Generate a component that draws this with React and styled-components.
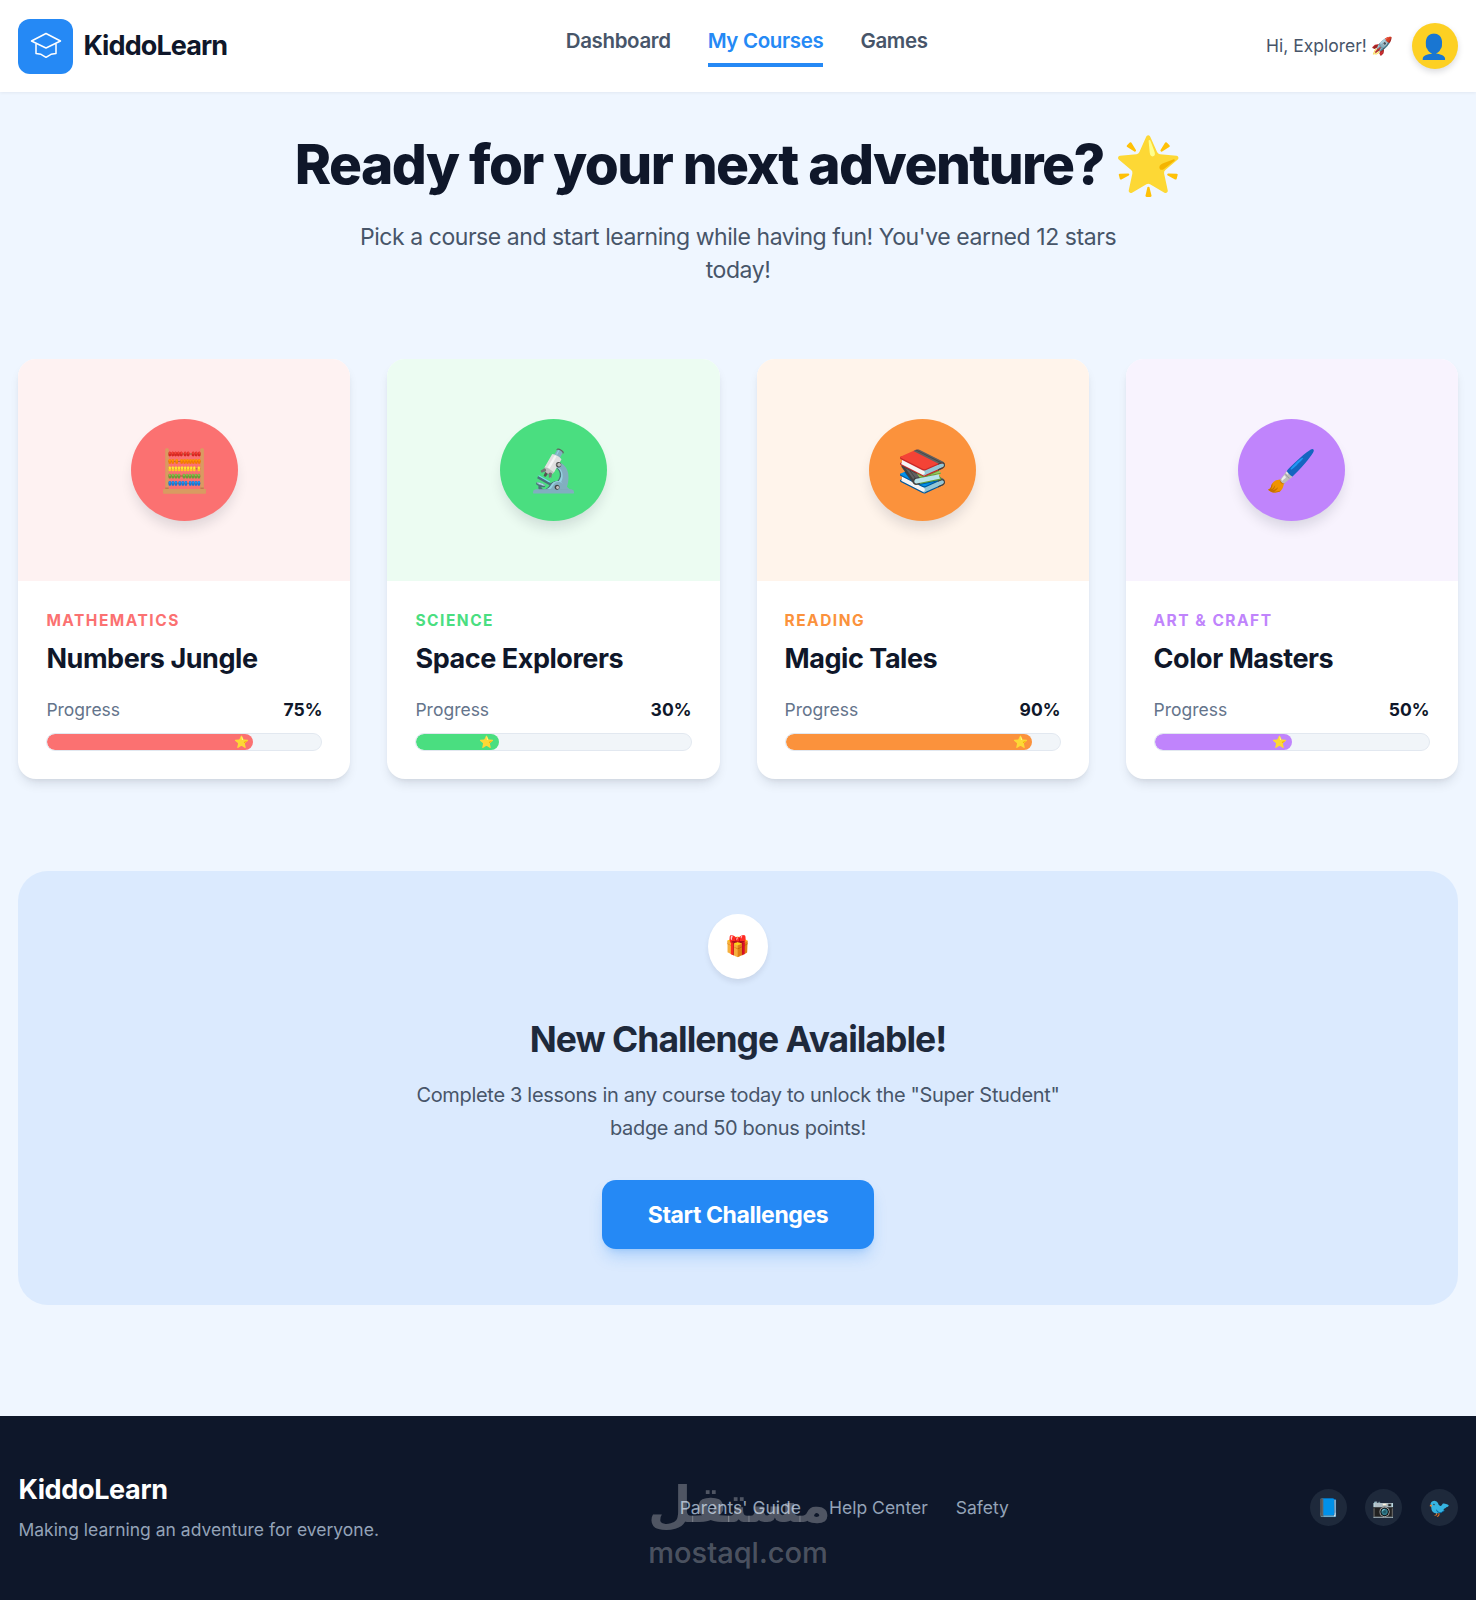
import React from "react";
import styled, { createGlobalStyle } from "styled-components";

const courses = [
  { subject: "MATHEMATICS", title: "Numbers Jungle", progress: 75, icon: "🧮", color: "#fb7171", tint: "#fef2f2" },
  { subject: "SCIENCE", title: "Space Explorers", progress: 30, icon: "🔬", color: "#4ade80", tint: "#ecfcf2" },
  { subject: "READING", title: "Magic Tales", progress: 90, icon: "📚", color: "#fb923c", tint: "#fff4eb" },
  { subject: "ART & CRAFT", title: "Color Masters", progress: 50, icon: "🖌️", color: "#c084fc", tint: "#f8f3fe" },
];

const App = () => {
  return (
    <Page>
      <GlobalStyle />
      <Header>
        <Brand>
          <LogoBox>
            <svg width="32" height="32" viewBox="0 0 32 32" fill="none" stroke="#fff" strokeWidth="1.5" strokeLinejoin="round">
              <path d="M16 3.500 30.500 11 16 18 1.500 11Z" />
              <path d="M6 14v9.500l5 .8 5 3 5-3 5-.8V14" />
            </svg>
          </LogoBox>
          <BrandName>KiddoLearn</BrandName>
        </Brand>
        <Nav>
          <NavLink>Dashboard</NavLink>
          <NavLink $active>My Courses</NavLink>
          <NavLink>Games</NavLink>
        </Nav>
        <UserArea>
          <Greeting>Hi, Explorer! 🚀</Greeting>
          <Avatar>👤</Avatar>
        </UserArea>
      </Header>

      <Main>
        <Hero>
          <HeroTitle>Ready for your next adventure? 🌟</HeroTitle>
          <HeroText>Pick a course and start learning while having fun! You've earned 12 stars today!</HeroText>
        </Hero>

        <CourseGrid>
          {courses.map((course) => (
            <Card key={course.title}>
              <CardTop $tint={course.tint}>
                <CourseIcon $color={course.color}>{course.icon}</CourseIcon>
              </CardTop>
              <CardBody>
                <Subject $color={course.color}>{course.subject}</Subject>
                <CourseTitle>{course.title}</CourseTitle>
                <ProgressRow>
                  <ProgressLabel>Progress</ProgressLabel>
                  <ProgressValue>{course.progress}%</ProgressValue>
                </ProgressRow>
                <Track>
                  <Fill $color={course.color} style={{ width: `${course.progress}%` }}>
                    <Star>⭐</Star>
                  </Fill>
                </Track>
              </CardBody>
            </Card>
          ))}
        </CourseGrid>

        <Challenge>
          <GiftCircle>🎁</GiftCircle>
          <ChallengeTitle>New Challenge Available!</ChallengeTitle>
          <ChallengeText>
            Complete 3 lessons in any course today to unlock the "Super Student" badge and 50 bonus points!
          </ChallengeText>
          <StartButton>Start Challenges</StartButton>
        </Challenge>
      </Main>

      <Footer>
        <div>
          <FooterBrand>KiddoLearn</FooterBrand>
          <FooterTag>Making learning an adventure for everyone.</FooterTag>
        </div>
        <FooterLinks>
          <FooterLink>Parents' Guide</FooterLink>
          <FooterLink>Help Center</FooterLink>
          <FooterLink>Safety</FooterLink>
        </FooterLinks>
        <Socials>
          <Social>📘</Social>
          <Social>📷</Social>
          <Social>🐦</Social>
        </Socials>
        <Watermark>
          <WatermarkArabic>مستقل</WatermarkArabic>
          <WatermarkLatin>mostaql.com</WatermarkLatin>
        </Watermark>
      </Footer>
    </Page>
  );
};

const GlobalStyle = createGlobalStyle`
  * { box-sizing: border-box; }
  body {
    margin: 0;
    background: #eff6ff;
    font-family: "Inter", "Noto Color Emoji", sans-serif;
  }
`;

const Page = styled.div`
  width: 1476px;
  height: 1600px;
  display: flex;
  flex-direction: column;
  overflow: hidden;
`;

const Header = styled.header`
  height: 92px;
  flex: 0 0 auto;
  background: #fff;
  box-shadow: 0 1px 3px rgba(15, 23, 42, 0.06);
  padding: 0 18.400px;
  display: flex;
  justify-content: space-between;
  align-items: center;
`;

const Brand = styled.div`
  display: flex;
  align-items: center;
  gap: 10px;
`;

const LogoBox = styled.div`
  width: 55px;
  height: 55px;
  border-radius: 12px;
  background: #2589f5;
  display: flex;
  align-items: center;
  justify-content: center;
`;

const BrandName = styled.span`
  padding-bottom: 2px;
  font-size: 27px;
  font-weight: 700;
  letter-spacing: -0.9px;
  color: #0f172a;
`;

const Nav = styled.nav`
  display: flex;
  gap: 37px;
  height: 100%;
`;

const NavLink = styled.a`
  height: 67px;
  padding-top: 28px;
  font-size: 20.500px;
  font-weight: 600;
  letter-spacing: -0.35px;
  color: ${({ $active }) => ($active ? "#2589f5" : "#475569")};
  border-bottom: 4px solid ${({ $active }) => ($active ? "#2589f5" : "transparent")};
`;

const UserArea = styled.div`
  display: flex;
  align-items: center;
  justify-content: flex-end;
  gap: 18px;
`;

const Greeting = styled.span`
  padding-bottom: 2px;
  font-size: 17.500px;
  color: #475569;
`;

const Avatar = styled.div`
  width: 46px;
  height: 46px;
  border-radius: 50%;
  background: #fdd023;
  box-shadow: 0 3px 6px rgba(15, 23, 42, 0.15);
  display: flex;
  align-items: center;
  justify-content: center;
  font-size: 24px;
`;

const Main = styled.main`
  flex: 1;
  padding: 0 18.400px;
`;

const Hero = styled.section`
  padding-top: 35px;
  text-align: center;
`;

const HeroTitle = styled.h1`
  margin: 0;
  font-size: 55px;
  line-height: 74px;
  font-weight: 800;
  letter-spacing: -1.570px;
  color: #0f172a;
`;

const HeroText = styled.p`
  width: 790px;
  margin: 20px auto 0;
  font-size: 23px;
  line-height: 32.500px;
  letter-spacing: -0.44px;
  color: #475569;
`;

const CourseGrid = styled.section`
  margin-top: 73px;
  display: grid;
  grid-template-columns: repeat(4, 1fr);
  gap: 37px;
`;

const Card = styled.article`
  height: 420px;
  border-radius: 18px;
  background: #fff;
  overflow: hidden;
  box-shadow: 0 7px 12px -3px rgba(15, 23, 42, 0.12), 0 3px 5px -2px rgba(15, 23, 42, 0.06);
`;

const CardTop = styled.div`
  height: 222px;
  background: ${({ $tint }) => $tint};
  display: flex;
  align-items: center;
  justify-content: center;
`;

const CourseIcon = styled.div`
  width: 107px;
  height: 102px;
  border-radius: 50%;
  background: ${({ $color }) => $color};
  box-shadow: 0 9px 14px -3px rgba(15, 23, 42, 0.14);
  display: flex;
  align-items: center;
  justify-content: center;
  font-size: 41px;
`;

const CardBody = styled.div`
  padding: 30px 28px 0;
`;

const Subject = styled.div`
  font-size: 15.500px;
  line-height: 20px;
  font-weight: 700;
  letter-spacing: 1.500px;
  color: ${({ $color }) => $color};
`;

const CourseTitle = styled.h3`
  margin: 8px 0 0;
  font-size: 27px;
  line-height: 40px;
  font-weight: 700;
  letter-spacing: -0.45px;
  color: #0f172a;
`;

const ProgressRow = styled.div`
  margin-top: 18px;
  display: flex;
  justify-content: space-between;
  align-items: center;
  font-size: 17.500px;
  line-height: 26px;
`;

const ProgressLabel = styled.span`
  color: #64748b;
`;

const ProgressValue = styled.span`
  font-weight: 700;
  color: #0f172a;
`;

const Track = styled.div`
  margin-top: 10px;
  height: 18px;
  border-radius: 9px;
  background: #f1f5f9;
  border: 1px solid #e2e8f0;
  overflow: hidden;
`;

const Fill = styled.div`
  position: relative;
  height: 100%;
  border-radius: 8px;
  background: ${({ $color }) => $color};
`;

const Star = styled.span`
  position: absolute;
  right: 4px;
  top: 0;
  font-size: 12px;
  line-height: 16px;
`;

const Challenge = styled.section`
  margin-top: 92px;
  height: 434px;
  border-radius: 30px;
  background: #dbeafe;
  padding-top: 43px;
  display: flex;
  flex-direction: column;
  align-items: center;
`;

const GiftCircle = styled.div`
  width: 60px;
  height: 65px;
  border-radius: 50%;
  background: #fff;
  box-shadow: 0 4px 6px -1px rgba(15, 23, 42, 0.1);
  display: flex;
  align-items: center;
  justify-content: center;
  padding-bottom: 2px;
  font-size: 20px;
`;

const ChallengeTitle = styled.h2`
  margin: 36px 0 0;
  font-size: 35.500px;
  line-height: 50px;
  font-weight: 700;
  letter-spacing: -1px;
  color: #1e293b;
`;

const ChallengeText = styled.p`
  width: 672px;
  margin: 14px 0 0;
  font-size: 20px;
  line-height: 32.500px;
  letter-spacing: -0.32px;
  text-align: center;
  color: #475569;
`;

const StartButton = styled.button`
  margin-top: 36px;
  width: 272px;
  height: 69px;
  border: none;
  border-radius: 14px;
  background: #2589f5;
  color: #fff;
  font-family: inherit;
  font-size: 23px;
  font-weight: 700;
  letter-spacing: -0.4px;
  box-shadow: 0 10px 15px -3px rgba(37, 137, 245, 0.25), 0 4px 6px -4px rgba(37, 137, 245, 0.25);
`;

const Footer = styled.footer`
  position: relative;
  height: 184px;
  flex: 0 0 auto;
  background: #0e172a;
  padding: 0 18.400px;
  display: flex;
  justify-content: space-between;
  align-items: center;
`;

const FooterBrand = styled.div`
  font-size: 27px;
  line-height: 34px;
  font-weight: 700;
  letter-spacing: -0.35px;
  color: #fff;
`;

const FooterTag = styled.div`
  margin-top: 9px;
  font-size: 17.500px;
  line-height: 27px;
  color: #94a3b8;
`;

const FooterLinks = styled.div`
  display: flex;
  gap: 28px;
  padding-bottom: 2px;
`;

const FooterLink = styled.a`
  font-size: 17.500px;
  color: #94a3b8;
`;

const Socials = styled.div`
  display: flex;
  justify-content: flex-end;
  gap: 18.500px;
  padding-bottom: 2px;
`;

const Social = styled.div`
  width: 37px;
  height: 37px;
  border-radius: 50%;
  background: #1e293b;
  display: flex;
  align-items: center;
  justify-content: center;
  font-size: 18px;
`;

const Watermark = styled.div`
  position: absolute;
  left: 648px;
  top: 58px;
  width: 180px;
  text-align: center;
  color: rgba(255, 255, 255, 0.27);
  pointer-events: none;
`;

const WatermarkArabic = styled.div`
  font-family: "DejaVu Sans", sans-serif;
  font-size: 50px;
  line-height: 62px;
  font-weight: 700;
`;

const WatermarkLatin = styled.div`
  font-size: 29px;
  line-height: 34px;
  font-weight: 500;
`;

export default App;
